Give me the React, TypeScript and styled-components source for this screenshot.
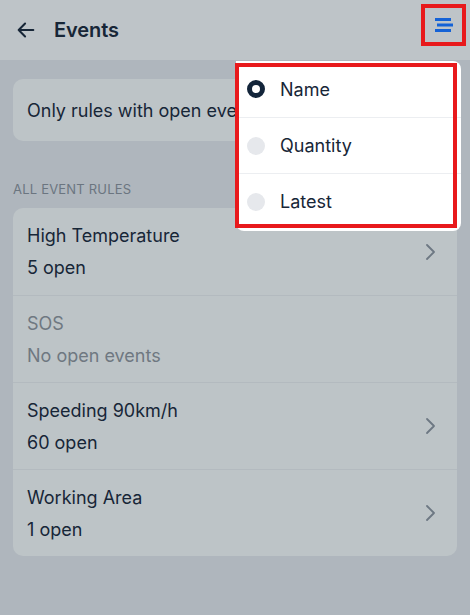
import styled, { createGlobalStyle } from "styled-components";

const GlobalStyle = createGlobalStyle`
  html, body {
    margin: 0;
    padding: 0;
    height: 100%;
    overflow: hidden;
    background: #afb6bd;
  }
  body {
    font-family: Inter, "Noto Sans", "Liberation Sans", sans-serif;
    color: #172637;
  }
  #root {
    height: 100%;
  }
`;

const Screen = styled.div`
  position: relative;
  width: 470px;
  height: 615px;
  background: #afb6bd;
`;

const Header = styled.header`
  display: flex;
  align-items: center;
  height: 60px;
  padding: 0 4px 0 14px;
  background: #bec4c8;
  box-sizing: border-box;
`;

const BackButton = styled.button`
  display: flex;
  align-items: center;
  justify-content: center;
  width: 24px;
  height: 24px;
  padding: 0;
  margin-right: 16px;
  border: none;
  background: none;
  color: #172637;
`;

const Title = styled.h1`
  flex: 1;
  margin: 0;
  font-size: 20px;
  font-weight: 600;
  letter-spacing: -0.1px;
`;

const SortButton = styled.button`
  display: flex;
  align-items: center;
  justify-content: center;
  width: 45px;
  height: 42px;
  padding: 0;
  margin-top: -10px;
  border: 4px solid #e8191c;
  background: none;
  box-sizing: border-box;
`;

const Content = styled.main`
  display: flex;
  flex-direction: column;
  padding: 19px 13px 0;
`;

const Card = styled.div`
  background: #bdc4c7;
  border-radius: 10px;
  overflow: hidden;
`;

const ToggleCard = styled(Card)`
  display: flex;
  align-items: center;
  height: 62px;
  padding: 0 14px;
  font-size: 18px;
`;

const SectionLabel = styled.div`
  margin: 40px 0 11px;
  font-size: 13px;
  letter-spacing: 0.2px;
  color: #6b7580;
`;

const Row = styled.div<{ $muted?: boolean }>`
  display: flex;
  align-items: center;
  height: 87px;
  padding: 0 20px 0 14px;
  box-sizing: border-box;
  color: ${(p) => (p.$muted ? "#6f7881" : "#172637")};
  & + & {
    border-top: 1px solid #b3babf;
  }
`;

const RowText = styled.div`
  flex: 1;
  display: flex;
  flex-direction: column;
  gap: 9px;
  font-size: 18px;
  line-height: 23px;
`;

const Chevron = styled.svg`
  width: 14px;
  height: 20px;
  color: #6d7883;
`;

const Menu = styled.div`
  position: absolute;
  left: 236px;
  top: 61px;
  width: 225px;
  padding-bottom: 2px;
  background: #fff;
  border-radius: 0 8px 8px 8px;
`;

const Highlight = styled.div`
  position: absolute;
  left: -1px;
  top: 2px;
  width: 222px;
  height: 165px;
  border: 4px solid #e8191c;
  box-sizing: border-box;
  pointer-events: none;
`;

const MenuItem = styled.div`
  display: flex;
  align-items: center;
  height: 56px;
  box-sizing: border-box;
  padding-left: 11px;
  font-size: 18px;
  color: #172637;
  & + & {
    border-top: 1px solid #eceef1;
  }
`;

const Radio = styled.span<{ $checked?: boolean }>`
  width: 18px;
  height: 18px;
  margin-right: 15px;
  border-radius: 50%;
  box-sizing: border-box;
  background: ${(p) => (p.$checked ? "#fff" : "#e6e8ec")};
  border: ${(p) => (p.$checked ? "5.5px solid #13253a" : "none")};
`;

const rules = [
  { name: "High Temperature", open: 5 },
  { name: "SOS", open: 0 },
  { name: "Speeding 90km/h", open: 60 },
  { name: "Working Area", open: 1 },
];

const sortOptions = ["Name", "Quantity", "Latest"];

const App = () => {
  return (
    <Screen>
      <GlobalStyle />
      <Header>
        <BackButton>
          <svg width="22" height="22" viewBox="0 0 24 24" fill="none" stroke="currentColor" strokeWidth="2.2" strokeLinecap="round" strokeLinejoin="round">
            <path d="M20 12H4M11 5l-7 7 7 7" />
          </svg>
        </BackButton>
        <Title>Events</Title>
        <SortButton>
          <svg width="18" height="16" viewBox="0 0 18 16" fill="none" stroke="#1462d6" strokeWidth="3">
            <path d="M0 2.5h16M2 8h16M0 13.5h16" />
          </svg>
        </SortButton>
      </Header>
      <Content>
        <ToggleCard>Only rules with open events</ToggleCard>
        <SectionLabel>ALL EVENT RULES</SectionLabel>
        <Card>
          {rules.map((r) => (
            <Row key={r.name} $muted={r.open === 0}>
              <RowText>
                <span>{r.name}</span>
                <span>{r.open === 0 ? "No open events" : `${r.open} open`}</span>
              </RowText>
              {r.open > 0 && (
                <Chevron viewBox="0 0 14 20" fill="none" stroke="currentColor" strokeWidth="1.8" strokeLinecap="round" strokeLinejoin="round">
                  <path d="M4 3l7 7-7 7" />
                </Chevron>
              )}
            </Row>
          ))}
        </Card>
      </Content>
      <Menu>
        {sortOptions.map((o, i) => (
          <MenuItem key={o}>
            <Radio $checked={i === 0} />
            {o}
          </MenuItem>
        ))}
        <Highlight />
      </Menu>
    </Screen>
  );
};

export default App;
